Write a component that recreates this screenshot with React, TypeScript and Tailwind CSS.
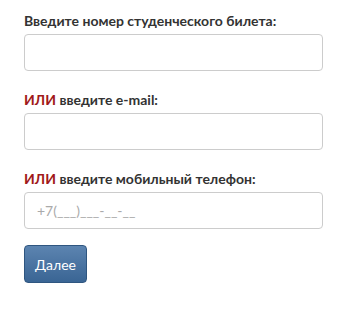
export default function App() {
  const font = { fontFamily: 'Lato, "Open Sans", sans-serif' }
  return (
    <div className="w-[351px] h-[311px] bg-white px-6 pt-[11px]" style={font}>
      <label className="block text-[14px] leading-[20px] font-bold text-[#333]">
        Введите номер студенческого билета:
      </label>
      <input
        className="mt-[3px] block w-[299px] h-[37px] rounded-[4px] border border-[#ccc] px-3 text-[14px] outline-none"
      />
      <label className="mt-[19px] block text-[14px] leading-[20px] font-bold text-[#333]">
        <span className="text-[#a11a1a]">ИЛИ</span> введите e-mail:
      </label>
      <input
        className="mt-[3px] block w-[299px] h-[37px] rounded-[4px] border border-[#ccc] px-3 text-[14px] outline-none"
      />
      <label className="mt-[19px] block text-[14px] leading-[20px] font-bold text-[#333]">
        <span className="text-[#a11a1a]">ИЛИ</span> введите мобильный телефон:
      </label>
      <input
        placeholder="+7(___)___-__-__"
        className="mt-[3px] block w-[299px] h-[37px] rounded-[4px] border border-[#ccc] px-3 text-[14px] outline-none placeholder:text-[#aaa]"
      />
      <button className="mt-[16px] block w-[63px] h-[38px] rounded-[4px] border border-[#2f5680] bg-gradient-to-b from-[#5c84b0] to-[#3a6594] text-white text-[14px]">
        Далее
      </button>
    </div>
  )
}
